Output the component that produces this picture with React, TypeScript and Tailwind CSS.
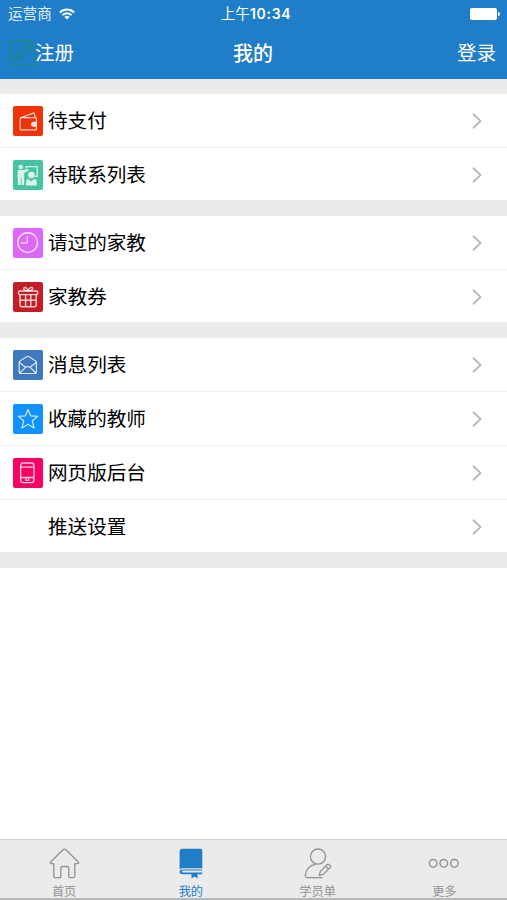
import type { ReactNode } from "react";
import { clsx } from "clsx";

type Row = { label: string; color?: string; icon?: ReactNode };

const stroke = {
  fill: "none",
  stroke: "currentColor",
  strokeWidth: 1.4,
  strokeLinecap: "round" as const,
  strokeLinejoin: "round" as const,
};

const WalletIcon = () => (
  <svg viewBox="0 0 30 30" className="h-full w-full" {...stroke} strokeWidth={1.2}>
    <path d="M8.2 11.6h14.2q1 0 1 1v10.3q0 1-1 1H8.2q-1 0-1-1V12.6q0-1 1-1Z" />
    <path d="M7.6 11.7 21 6.9l1.3 4.5" />
    <path d="M23.4 16.4h-2.9a1.9 1.9 0 0 0 0 3.8h2.9" fill="currentColor" />
  </svg>
);

const TeachIcon = () => (
  <svg viewBox="0 0 30 30" className="h-full w-full" fill="currentColor">
    <path d="M13 6.6h11.2v9.7H22M13 6.6v2" fill="none" stroke="currentColor" strokeWidth="1.2" />
    <circle cx="7.7" cy="7" r="2.3" />
    <path d="M4.7 10h6.4l4-1.2.7 1.8-4.6 2.5V25H8.5v-7.2h-.8V25H4.9v-7.4h-.5Z" />
    <circle cx="18.4" cy="15" r="3.3" />
    <path d="M13 25.4v-3.5q0-2.5 2.7-2.8l2.7 2.4 2.7-2.4q2.7.3 2.7 2.8v3.5Z" />
  </svg>
);

const ClockIcon = () => (
  <svg viewBox="0 0 30 30" className="h-full w-full" {...stroke}>
    <circle cx="14.7" cy="14.6" r="9.9" />
    <path d="M14.3 8.4v6.5H8.4" />
  </svg>
);

const GiftIcon = () => (
  <svg viewBox="0 0 30 30" className="h-full w-full" {...stroke}>
    <rect x="5.4" y="9" width="19.4" height="3.6" rx="1.5" />
    <path d="M7 12.8v10.2q0 1.7 1.7 1.7h12.8q1.7 0 1.7-1.7V12.8M7 18.3h16.2M12.6 12.6v12M17.8 12.6v12" />
    <path d="M15.2 8.8C10.4 9.2 9.7 5.5 12 5.4c1.5 0 2.5 1.7 3.2 3.4.7-1.7 1.7-3.4 3.2-3.4 2.3.1 1.6 3.8-3.2 3.4Z" />
  </svg>
);

const MailIcon = () => (
  <svg viewBox="0 0 30 30" className="h-full w-full" {...stroke} strokeWidth={1.2}>
    <path d="M6.2 12.3q0-.8.7-1.2l7.1-4.6q.8-.5 1.6 0l7.1 4.6q.7.4.7 1.2v9.8q0 1.4-1.4 1.4H7.6q-1.4 0-1.4-1.4Z" />
    <path d="m6.5 12.5 6 4.8q2.3-1.3 4.6 0l6-4.8M6.8 23l5.7-5.7M22.9 23l-5.8-5.7" />
  </svg>
);

const StarIcon = () => (
  <svg viewBox="0 0 30 30" className="h-full w-full" {...stroke} strokeWidth={1.2}>
    <path d="m15 5.4 2.7 6.5 6.9.5-5.3 4.6 1.7 6.9-6-3.7-6 3.7 1.7-6.9-5.3-4.6 6.9-.5Z" />
  </svg>
);

const PhoneIcon = () => (
  <svg viewBox="0 0 30 30" className="h-full w-full" {...stroke} strokeWidth={1.3}>
    <rect x="7.6" y="5" width="13.4" height="19.6" rx="2.6" />
    <path d="M7.8 9.2h13M7.8 19.5h13M13 19.7v2.6h2.6v-2.6" />
  </svg>
);

const groups: Row[][] = [
  [
    { label: "待支付", color: "bg-[#f03208]", icon: <WalletIcon /> },
    { label: "待联系列表", color: "bg-[#45c4a3]", icon: <TeachIcon /> },
  ],
  [
    { label: "请过的家教", color: "bg-[#dd66fb]", icon: <ClockIcon /> },
    { label: "家教券", color: "bg-[#c41d25]", icon: <GiftIcon /> },
  ],
  [
    { label: "消息列表", color: "bg-[#3f78be]", icon: <MailIcon /> },
    { label: "收藏的教师", color: "bg-[#1191fc]", icon: <StarIcon /> },
    { label: "网页版后台", color: "bg-[#fb0262]", icon: <PhoneIcon /> },
    { label: "推送设置" },
  ],
];

const tabs = [
  {
    label: "首页",
    icon: (
      <svg viewBox="0 0 32 32" className="h-8 w-8" {...stroke} strokeWidth={1.3}>
        <path d="M15 2.7q1.4-1.2 2.8 0L30.3 15q1.2 1.6-.8 1.7h-2.7v12.2q0 1.8-1.8 1.8h-3.2q-1 0-1-1v-8.4q0-1.8-1.8-1.8h-4.4q-1.8 0-1.8 1.8v8.4q0 1-1 1H7.6q-1.8 0-1.8-1.8V16.7H3.5q-2-.1-.8-1.7Z" />
      </svg>
    ),
  },
  {
    label: "我的",
    active: true,
    icon: (
      <svg viewBox="0 0 32 32" className="h-8 w-8" fill="currentColor">
        <path d="M6.7 1.7h18.8q1.8 0 1.8 1.7v17.9H8q-1.9 0-3.4 1.2V4.2q0-2.5 2.1-2.5Z" />
        <path d="M8 22.4h19.3v1.1H8.2q-1.2 0-1.2 1t1.2 1h19.1v1.8h-4.8v4.2l-3-2-3 2v-4.2H7.8q-3.2 0-3.2-2.5 0-2.4 3.4-2.4Z" />
      </svg>
    ),
  },
  {
    label: "学员单",
    icon: (
      <svg viewBox="0 0 32 32" className="h-8 w-8" {...stroke} strokeWidth={1.3}>
        <circle cx="16" cy="9.6" r="7.6" />
        <path d="M13.2 17.4C7.4 18.6 4.2 22.3 3.4 27.5q-.3 3.2 2.5 3.2h14.3" />
        <path d="m17.4 28.4.9-4 7-6.9q.8-.7 1.6 0l1.3 1.3q.7.8 0 1.6l-6.8 7Zm6.2-9.2 2.9 2.9" />
      </svg>
    ),
  },
  {
    label: "更多",
    icon: (
      <svg viewBox="0 0 32 32" className="h-8 w-8" {...stroke} strokeWidth={1.4}>
        <circle cx="5.2" cy="16.3" r="3.8" />
        <circle cx="15.8" cy="16.3" r="3.8" />
        <circle cx="26.4" cy="16.3" r="3.8" />
      </svg>
    ),
  },
];

function Header() {
  return (
    <header className="h-[79px] bg-[#207dc8] text-white">
      {/* Status bar */}
      <div className="grid h-7 grid-cols-3 items-center pr-[7px] pl-[8px] text-[14.6px] leading-none">
        <div className="flex items-center gap-[7px] text-white/85">
          <span className="pt-px">运营商</span>
          <svg viewBox="0 0 16 12" className="h-3 w-4" fill="none" stroke="white" strokeWidth="1.9">
            <path d="M.9 4.5a10 10 0 0 1 14.2 0M3.4 7.1a6.5 6.5 0 0 1 9.2 0" />
            <path d="M8 11.6 5.4 9a3.7 3.7 0 0 1 5.2 0Z" fill="white" stroke="none" />
          </svg>
        </div>
        <div className="flex items-center justify-center pl-1 whitespace-nowrap">
          <span className="pt-px">上午</span>
          <span className="font-[Inter] text-[14px] font-semibold tracking-[0.7px]">10:34</span>
        </div>
        <div className="flex items-center justify-end gap-px">
          <div className="h-3 w-[27px] rounded-[2px] bg-white" />
          <div className="h-1 w-[2px] rounded-r-full bg-white" />
        </div>
      </div>

      {/* Title bar */}
      <div className="grid h-12 grid-cols-3 items-center pr-[11px] pl-[9px] text-[19.5px] leading-none">
        <div className="flex items-center">
          <svg viewBox="0 0 27 27" className="-mr-px h-[27px] w-[27px] text-[#168e70]" {...stroke} strokeWidth={1.2}>
            <path d="M19 1.5H1.5v24h24V9" />
            <path d="m6 20.8 1.8-6.1L20.4 2.1l4 4L12 18.7Zm1.8-6.1 4.2 4M18 4.7l3.8 3.9" />
          </svg>
          <span className="pt-[3px]">注册</span>
        </div>
        <h1 className="pt-[3px] pl-px text-center text-[20px] font-medium">我的</h1>
        <span className="pt-[3px] text-right">登录</span>
      </div>
    </header>
  );
}

function ListRow({ label, color, icon }: Row) {
  return (
    <li className="flex h-[54px] items-center border-b border-[#efefef] pr-[24px] pl-[13px] last:h-[52px] last:border-0 last:pt-px">
      <div className={clsx("mr-[5px] h-[30px] w-[30px] rounded-[2px] text-white/80", color)}>{icon}</div>
      <span className="flex-1 pt-[3px] text-[19.6px] leading-none text-black">{label}</span>
      <svg viewBox="0 0 12 18" className="h-[18px] w-3 text-[#b9b9b9]" fill="none" stroke="currentColor" strokeWidth="1.9">
        <path d="m2 1.8 7.5 7.2L2 16.2" />
      </svg>
    </li>
  );
}

export default function App() {
  return (
    <div className="flex h-[900px] w-[507px] flex-col overflow-hidden bg-white font-['Liberation_Sans','Noto_Sans_CJK_SC',sans-serif]">
      <Header />

      <main className="flex-1">
        <div className="flex flex-col gap-4 bg-[#ebebeb] pt-[15px] pb-4">
          {groups.map((rows) => (
            <ul key={rows[0].label} className="bg-white">
              {rows.map((row) => (
                <ListRow key={row.label} {...row} />
              ))}
            </ul>
          ))}
        </div>
      </main>

      <nav className="grid h-[61px] grid-cols-4 border-t border-b-2 border-t-[#cfcfcf] border-b-[#b8b8b8] bg-[#ebebeb]">
        {tabs.map((tab) => (
          <div
            key={tab.label}
            className={clsx("flex flex-col items-center pt-[7px] pl-[1.5px]", tab.active ? "text-[#207dc8]" : "text-[#929292]")}
          >
            {tab.icon}
            <span className="mt-[7px] text-[12.2px] leading-none">{tab.label}</span>
          </div>
        ))}
      </nav>
    </div>
  );
}
